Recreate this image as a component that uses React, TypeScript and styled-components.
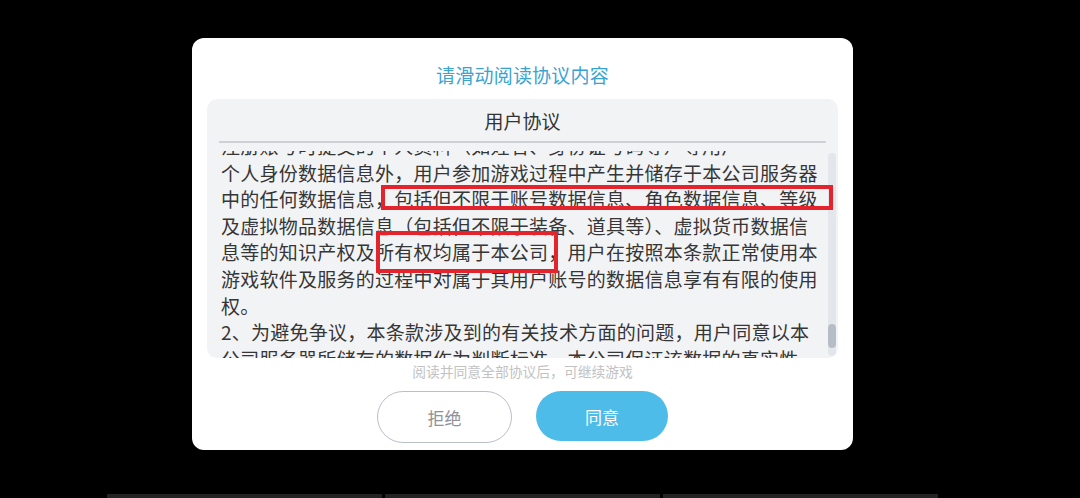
import React from "react";
import styled, { createGlobalStyle } from "styled-components";

const Global = createGlobalStyle`
  html, body { margin: 0; padding: 0; background: #000; }
  body { font-family: "Noto Sans CJK SC", "Noto Sans", sans-serif; }
`;

const Stage = styled.div`
  width: 1080px;
  height: 498px;
  background: #000;
  display: flex;
  flex-direction: column;
  overflow: hidden;
`;

const ModalRow = styled.div`
  padding: 38px 0 0 192px;
  flex: 1;
`;

const Modal = styled.div`
  width: 661px;
  height: 412px;
  box-sizing: border-box;
  background: #fff;
  border-radius: 12px;
  padding: 0 15px;
  display: flex;
  flex-direction: column;
  align-items: center;
`;

const Title = styled.div`
  flex-shrink: 0;
  height: 61px;
  line-height: 22px;
  padding-top: 26px;
  box-sizing: border-box;
  font-size: 19px;
  color: #39a3d2;
  letter-spacing: 0.2px;
`;

const Panel = styled.div`
  flex-shrink: 0;
  width: 631px;
  height: 259px;
  background: #f2f3f5;
  border-radius: 10px;
  display: flex;
  flex-direction: column;
  overflow: hidden;
`;

const PanelHead = styled.div`
  flex-shrink: 0;
  height: 42px;
  line-height: 44px;
  text-align: center;
  font-size: 19px;
  color: #333;
`;

const Divider = styled.div`
  flex-shrink: 0;
  margin: 0 12px;
  height: 2px;
  background: #cdd0d4;
`;

const Body = styled.div`
  position: relative;
  flex: 1;
  min-height: 0;
  display: flex;
  padding-top: 8px;
`;

const Viewport = styled.div`
  flex: 1;
  min-height: 0;
  overflow: hidden;
  padding-left: 14px;
`;

const Lines = styled.div`
  margin-top: -18px;
  font-size: 19px;
  line-height: 26.6px;
  letter-spacing: 0.25px;
  color: #363636;
  white-space: nowrap;
`;

const Line = styled.div``;

const Track = styled.div`
  flex-shrink: 0;
  width: 8px;
  margin: 2px 2px 2px 7px;
  border-radius: 4px;
  background: #e3e6ea;
  display: flex;
  flex-direction: column;
  justify-content: flex-end;
  padding-bottom: 8px;
`;

const Thumb = styled.div`
  height: 24px;
  border-radius: 4px;
  background: #b7bdc7;
`;

const Mark = styled.div<{ $l: number; $t: number; $w: number; $h: number }>`
  position: absolute;
  left: ${(p) => p.$l}px;
  top: ${(p) => p.$t}px;
  width: ${(p) => p.$w}px;
  height: ${(p) => p.$h}px;
  box-sizing: border-box;
  border: 4px solid #e4242c;
  pointer-events: none;
`;

const Hint = styled.div`
  flex-shrink: 0;
  margin-top: 2px;
  height: 23px;
  line-height: 23px;
  font-size: 13.8px;
  color: #c2c2c2;
`;

const Buttons = styled.div`
  flex-shrink: 0;
  margin-top: 8px;
  display: flex;
  gap: 24px;
  align-items: flex-start;
`;

const Btn = styled.button<{ $primary?: boolean }>`
  width: ${(p) => (p.$primary ? 132 : 135)}px;
  height: ${(p) => (p.$primary ? 50 : 52)}px;
  border-radius: 26px;
  box-sizing: border-box;
  font-family: "Noto Sans CJK SC", sans-serif;
  font-size: 17px;
  cursor: pointer;
  border: ${(p) => (p.$primary ? "none" : "1.5px solid #b9bfc9")};
  background: ${(p) => (p.$primary ? "#4dbce9" : "#fff")};
  color: ${(p) => (p.$primary ? "#fff" : "#8e9298")};
`;

const Dock = styled.div`
  flex-shrink: 0;
  height: 4px;
  display: flex;
  gap: 3px;
  padding-left: 107px;
`;

const DockBar = styled.div`
  width: 275px;
  background: #232323;
`;

const lines = [
  "注册账号时提交的个人资料（如姓名、身份证号码等）等用户",
  "个人身份数据信息外，用户参加游戏过程中产生并储存于本公司服务器",
  "中的任何数据信息，包括但不限于账号数据信息、角色数据信息、等级",
  "及虚拟物品数据信息（包括但不限于装备、道具等）、虚拟货币数据信",
  "息等的知识产权及所有权均属于本公司，用户在按照本条款正常使用本",
  "游戏软件及服务的过程中对属于其用户账号的数据信息享有有限的使用",
  "权。",
  "2、为避免争议，本条款涉及到的有关技术方面的问题，用户同意以本",
  "公司服务器所储存的数据作为判断标准，本公司保证该数据的真实性",
];

export default function App() {
  return (
    <Stage>
      <Global />
      <ModalRow>
        <Modal>
          <Title>请滑动阅读协议内容</Title>
          <Panel>
            <PanelHead>用户协议</PanelHead>
            <Divider />
            <Body>
              <Viewport>
                <Lines>
                  {lines.map((l, i) => (
                    <Line key={i}>{l}</Line>
                  ))}
                </Lines>
              </Viewport>
              <Track>
                <Thumb />
              </Track>
              <Mark $l={174} $t={42} $w={452} $h={25} />
              <Mark $l={169} $t={88} $w={182} $h={42} />
            </Body>
          </Panel>
          <Hint>阅读并同意全部协议后，可继续游戏</Hint>
          <Buttons>
            <Btn>拒绝</Btn>
            <Btn $primary>同意</Btn>
          </Buttons>
        </Modal>
      </ModalRow>
      <Dock>
        <DockBar />
        <DockBar />
        <DockBar />
      </Dock>
    </Stage>
  );
}
